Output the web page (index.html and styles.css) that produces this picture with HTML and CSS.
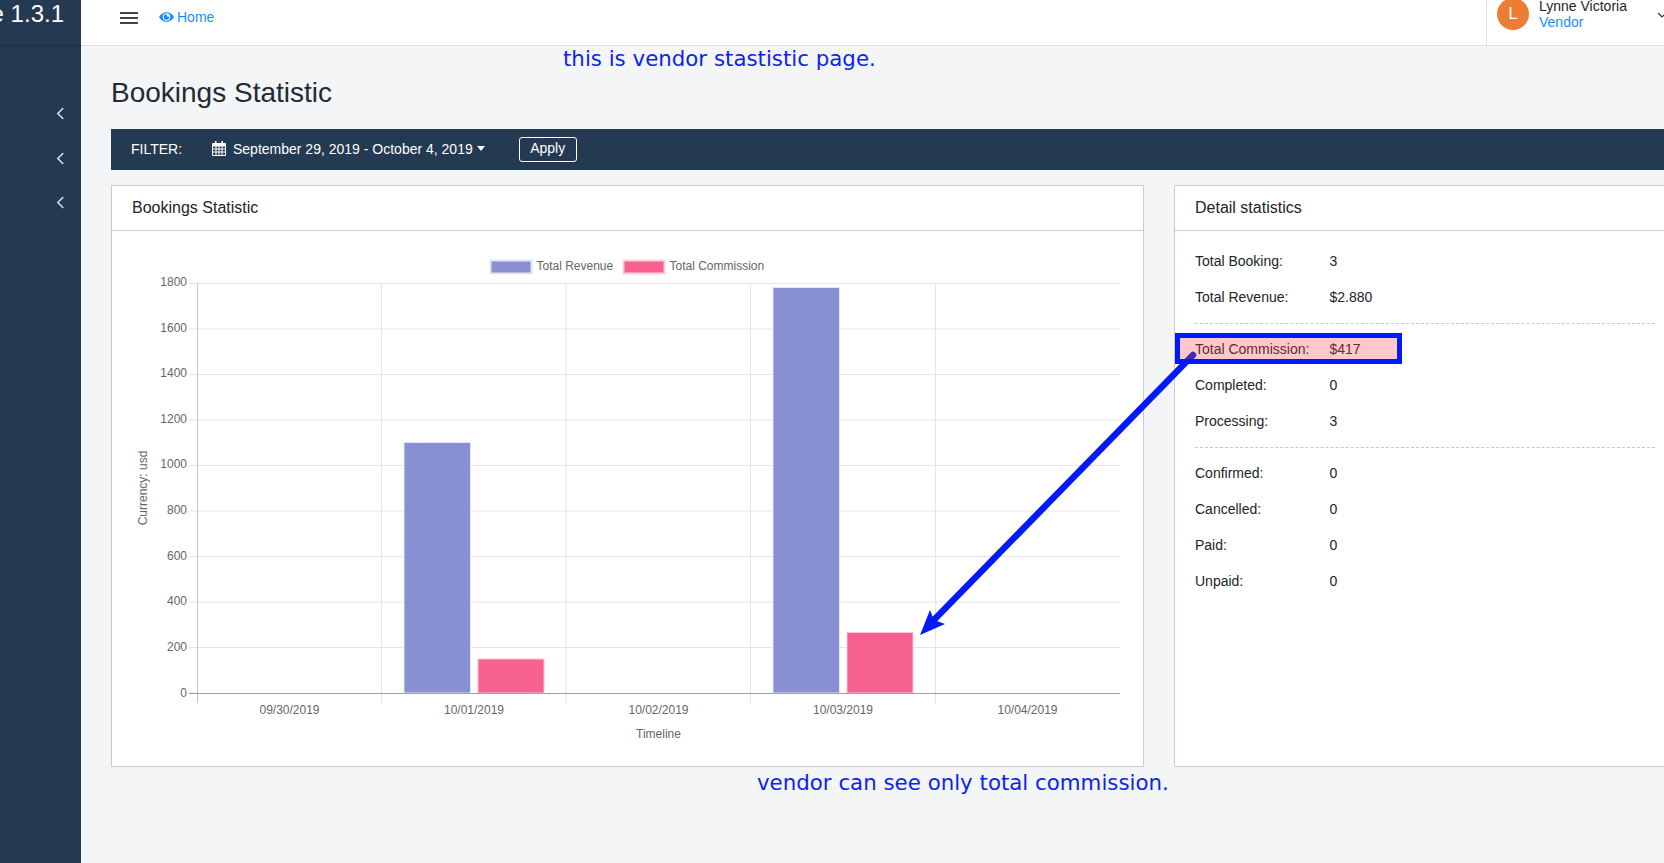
FILE: index.html
```html
<!DOCTYPE html>
<html lang="en">
<head>
<meta charset="utf-8">
<title>Bookings Statistic</title>
<link rel="stylesheet" href="styles.css">
</head>
<body>
<div class="app">
  <aside class="sidebar">
    <div class="brand"><span>e 1.3.1</span></div>
    <ul class="side-menu">
      <li><svg class="chev" viewBox="0 0 8 12"><path d="M6.5 1 1.5 6l5 5"/></svg></li>
      <li><svg class="chev" viewBox="0 0 8 12"><path d="M6.5 1 1.5 6l5 5"/></svg></li>
      <li><svg class="chev" viewBox="0 0 8 12"><path d="M6.5 1 1.5 6l5 5"/></svg></li>
    </ul>
  </aside>
  <main class="main">
    <header class="topbar">
      <div class="burger"><span></span><span></span><span></span></div>
      <a class="home">
        <svg class="eye" viewBox="0 0 16 12"><path fill-rule="evenodd" d="M8 1C4.600 1 1.800 3 .3 5.500a1 1 0 0 0 0 1C1.800 9 4.600 11 8 11s6.200-2 7.700-4.500a1 1 0 0 0 0-1C14.200 3 11.400 1 8 1ZM8 2a4 4 0 1 1 0 8 4 4 0 0 1 0-8Zm0 1c.3 0 .5 0 .7.100a1 1 0 0 0 2.200 2.200A3 3 0 1 1 8 3Z"/></svg>
        Home
      </a>
      <div class="user">
        <div class="avatar">L</div>
        <div class="user-text">
          <div class="user-name">Lynne Victoria</div>
          <div class="user-role">Vendor</div>
        </div>
        <svg class="user-chev" viewBox="0 0 10 6"><path d="M1 1l4 4 4-4"/></svg>
      </div>
    </header>
    <section class="content">
      <h1 class="title">Bookings Statistic</h1>
      <div class="filter">
        <span class="filter-label">FILTER:</span>
        <span class="range">
          <svg class="cal" viewBox="0 0 14 15"><path fill-rule="evenodd" d="M3 0h1.500v2H9.500V0H11v2h2a1 1 0 0 1 1 1v11a1 1 0 0 1-1 1H1a1 1 0 0 1-1-1V3a1 1 0 0 1 1-1h2V0ZM1 5.500v2h2.500v-2H1Zm3.500 0v2h2v-2h-2Zm3 0v2h2v-2h-2Zm3 0v2H13v-2h-2.500ZM1 8.500v2h2.500v-2H1Zm3.500 0v2h2v-2h-2Zm3 0v2h2v-2h-2Zm3 0v2H13v-2h-2.500ZM1 11.500V14h2.500v-2.500H1Zm3.500 0V14h2v-2.500h-2Zm3 0V14h2v-2.500h-2Zm3 0V14H13v-2.500h-2.500Z"/></svg>
          <span>September 29, 2019 - October 4, 2019</span>
          <i class="caret"></i>
        </span>
        <button class="apply">Apply</button>
      </div>
      <div class="cards">
        <div class="card">
          <div class="card-head">Bookings Statistic</div>
          <svg class="chart" viewBox="112 231 1031 534" width="1031" height="534">
            <g class="grid">
              <path d="M197 283.500H1120M197 329H1120M197 374.500H1120M197 420H1120M197 465.500H1120M197 511H1120M197 556.500H1120M197 602H1120M197 647.500H1120"/>
              <path d="M381.500 283V703M566 283V703M750.500 283V703M935.500 283V703"/>
              <path d="M189 283.500H197M189 329H197M189 374.500H197M189 420H197M189 465.500H197M189 511H197M189 556.500H197M189 602H197M189 647.500H197M189 693H197"/>
            </g>
            <path class="axis" d="M197.500 283V703"/>
            <rect class="bar-a" x="404" y="442.500" width="66.500" height="250.500"/>
            <rect class="bar-b" x="478" y="659" width="66" height="34"/>
            <rect class="bar-a" x="773" y="287.500" width="66.500" height="405.500"/>
            <rect class="bar-b" x="847" y="632.500" width="66" height="60.500"/>
            <path class="axis zero" d="M189 693.500H1120"/>
            <g class="ylabels">
              <text x="187" y="286">1800</text><text x="187" y="332">1600</text><text x="187" y="377">1400</text><text x="187" y="423">1200</text><text x="187" y="468">1000</text><text x="187" y="514">800</text><text x="187" y="560">600</text><text x="187" y="605">400</text><text x="187" y="651">200</text><text x="187" y="697">0</text>
            </g>
            <g class="xlabels">
              <text x="289.500" y="714">09/30/2019</text><text x="474" y="714">10/01/2019</text><text x="658.500" y="714">10/02/2019</text><text x="843" y="714">10/03/2019</text><text x="1027.500" y="714">10/04/2019</text>
              <text x="658.500" y="738">Timeline</text>
              <text transform="translate(147 488) rotate(-90)">Currency: usd</text>
            </g>
            <rect class="swatch-a" x="490.500" y="260.500" width="41" height="13"/>
            <text class="legend" x="536.500" y="270">Total Revenue</text>
            <rect class="swatch-b" x="623.500" y="260.500" width="41" height="13"/>
            <text class="legend" x="669.500" y="270">Total Commission</text>
          </svg>
        </div>
        <div class="card">
          <div class="card-head">Detail statistics</div>
          <div class="details">
            <div class="group">
              <div class="row"><span class="key">Total Booking:</span><span>3</span></div>
              <div class="row"><span class="key">Total Revenue:</span><span>$2.880</span></div>
            </div>
            <div class="group">
              <div class="row"><span class="key">Total Commission:</span><span>$417</span></div>
              <div class="row"><span class="key">Completed:</span><span>0</span></div>
              <div class="row"><span class="key">Processing:</span><span>3</span></div>
            </div>
            <div class="group">
              <div class="row"><span class="key">Confirmed:</span><span>0</span></div>
              <div class="row"><span class="key">Cancelled:</span><span>0</span></div>
              <div class="row"><span class="key">Paid:</span><span>0</span></div>
              <div class="row"><span class="key">Unpaid:</span><span>0</span></div>
            </div>
          </div>
        </div>
      </div>
    </section>
  </main>
</div>
<div class="note note-top">this is vendor stastistic page.</div>
<div class="note note-bottom">vendor can see only total commission.</div>
<svg class="arrow" viewBox="0 0 1664 863" width="1664" height="863">
  <path class="arrow-line" d="M1193 355 928 626"/>
  <path class="arrow-head" d="M920 635 930 610 934 620 945 624Z"/>
</svg>
<div class="highlight"></div>
</body>
</html>
```
FILE: styles.css
```css
* { box-sizing: border-box; }
html, body { margin: 0; height: 100%; overflow: hidden; }
body { font-family: "Liberation Sans", Arial, sans-serif; font-size: 14px; color: #212529; background: #f4f5f7; }
.app { display: flex; width: 1664px; height: 863px; overflow: hidden; }

.sidebar { flex: 0 0 81px; width: 81px; min-width: 0; background: #243a52; display: flex; flex-direction: column; overflow: hidden; }
.brand { height: 46px; border-bottom: 1px solid #1c2e42; display: flex; justify-content: flex-end; padding-right: 17px; color: #fff; font-size: 24px; line-height: 28px; white-space: nowrap; }
.brand span { flex: none; }
.side-menu { list-style: none; margin: 0; display: flex; flex-direction: column; align-items: flex-end; padding: 61px 16px 0 0; gap: 31.500px; }
.side-menu li { height: 13px; display: flex; }
.chev { width: 9px; height: 13px; fill: none; stroke: #cfd6de; stroke-width: 1.500; }

.main { flex: 1; min-width: 0; display: flex; flex-direction: column; }
.topbar { flex: 0 0 46px; background: #fff; border-bottom: 1px solid #dcdee0; display: flex; align-items: flex-start; padding-left: 39px; overflow: hidden; }
.burger { width: 18px; display: flex; flex-direction: column; gap: 3px; margin-top: 12px; }
.burger span { display: block; height: 2px; background: #444; }
.home { display: flex; align-items: center; gap: 3px; margin-left: 21px; margin-top: 9px; color: #1a8cff; line-height: 16px; }
.eye { width: 15px; height: 12px; fill: #1a8cff; }
.user { margin-left: auto; width: 178px; height: 45px; border-left: 1px solid #dcdee0; display: flex; align-items: flex-end; padding: 0 0 15px 10px; position: relative; }
.avatar { width: 32px; height: 32px; border-radius: 50%; background: #ed7d33; color: #fff; font-size: 16px; display: flex; align-items: center; justify-content: center; flex: none; }
.user-text { margin-left: 10px; line-height: 16px; white-space: nowrap; }
.user-name { color: #212529; }
.user-role { color: #1a8cff; }
.user-chev { position: absolute; left: 170px; top: 12px; width: 10px; height: 6px; fill: none; stroke: #333; stroke-width: 1.200; }

.content { padding: 30px 0 0 30px; flex: 1; min-width: 0; }
.title { margin: 0 0 19px; font-size: 28px; font-weight: 400; line-height: 34px; color: #212b36; }
.filter { height: 41px; background: #243a52; color: #fff; display: flex; align-items: center; padding: 0 0 2px 20px; }
.filter-label { width: 81px; }
.range { display: flex; align-items: center; white-space: nowrap; }
.cal { width: 14px; height: 15px; fill: #fff; margin-right: 7px; }
.caret { width: 0; height: 0; border-left: 4.500px solid transparent; border-right: 4.500px solid transparent; border-top: 5px solid #fff; margin-left: 4.500px; }
.apply { margin: 2px 0 0 33.500px; width: 58px; height: 25px; padding: 0 0 4px; background: transparent; border: 1px solid #fff; border-radius: 3px; color: #fff; font: 14px "Liberation Sans", Arial, sans-serif; }

.cards { display: grid; grid-template-columns: 1033px 520px; gap: 30px; margin-top: 15px; height: 582px; }
.card { background: #fff; border: 1px solid #c8ccd0; min-width: 0; }
.card-head { height: 45px; border-bottom: 1px solid #c8ccd0; padding-left: 20px; font-size: 16px; line-height: 44px; }
.chart { display: block; font-family: "Liberation Sans", Arial, sans-serif; font-size: 12px; }
.grid path { fill: none; stroke: #e4e4e4; stroke-width: 1; }
.axis { fill: none; stroke: #c6c6c6; stroke-width: 1; }
.zero { stroke: #a0a0a0; }
.bar-a { fill: #8890d3; stroke: #e6e8f7; stroke-width: 1; }
.bar-b { fill: #f76190; stroke: #fcc4d6; stroke-width: 1; }
.ylabels text { fill: #666; text-anchor: end; }
.xlabels text { fill: #666; text-anchor: middle; }
.legend { fill: #666; }
.swatch-a { fill: #8890d3; stroke: #e2e4f4; stroke-width: 2; }
.swatch-b { fill: #f76190; stroke: #fcd0de; stroke-width: 2; }

.details { padding: 12px 38px 0 20px; }
.group { border-bottom: 1px dashed #c8c8c8; padding-bottom: 8px; margin-bottom: 7px; }
.group:last-child { border-bottom: 0; }
.row { display: flex; height: 36px; align-items: center; }
.key { width: 134.500px; }

.note { position: absolute; color: #0a24f0; font-family: "DejaVu Sans", sans-serif; font-size: 21.33px; line-height: 24px; white-space: nowrap; }
.note-top { left: 563px; top: 47px; }
.note-bottom { left: 757px; top: 771px; }
.highlight { position: absolute; left: 1175px; top: 333px; width: 227px; height: 31px; border: 5px solid #0019ff; background: rgba(255, 60, 70, .28); }
.arrow { position: absolute; left: 0; top: 0; pointer-events: none; }
.arrow-line { fill: none; stroke: #0019ff; stroke-width: 6.500; stroke-linecap: round; }
.arrow-head { fill: #0019ff; }
```
